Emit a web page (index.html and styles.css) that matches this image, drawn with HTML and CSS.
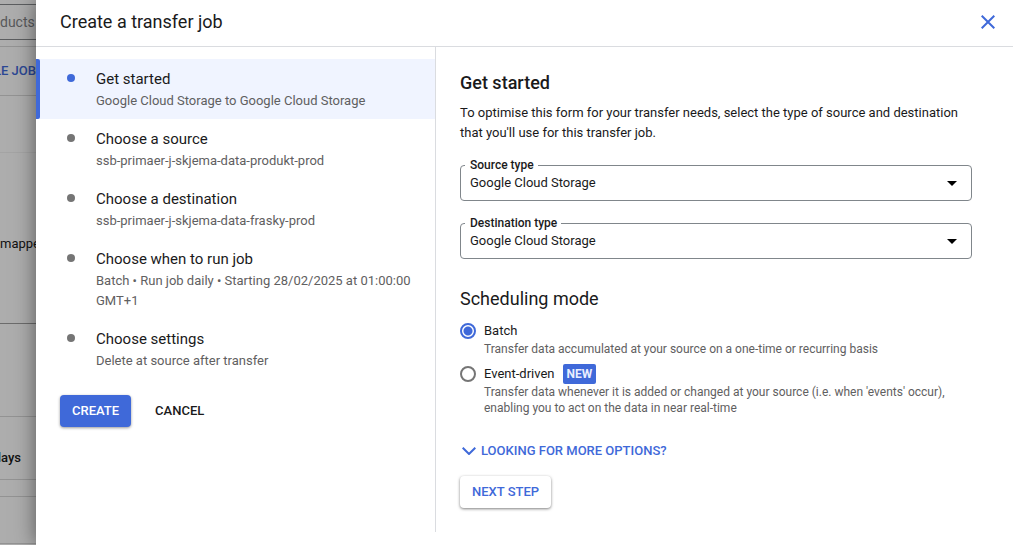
FILE: index.html
```html
<!DOCTYPE html>
<html lang="en-GB">
<head>
<meta charset="utf-8">
<meta name="viewport" content="width=device-width, initial-scale=1">
<title>Create a transfer job</title>
<link rel="stylesheet" href="styles.css">
</head>
<body class="page">
  <div class="backdrop">
    <div class="strip strip-top"></div>
    <div class="strip strip-search">ducts</div>
    <div class="strip strip-gap"></div>
    <div class="strip strip-toolbar"><a class="backdrop-link" href="#jobs">LE JOB</a></div>
    <div class="strip strip-filter"></div>
    <div class="strip strip-folder">mappe</div>
    <div class="strip strip-blank"></div>
    <div class="strip strip-days">lays</div>
    <div class="strip strip-thin"></div>
    <div class="strip strip-foot"></div>
  </div>
  <main class="panel">
    <header class="panel-header">
      <h1 class="title">Create a transfer job</h1>
      <button class="close" type="button" aria-label="Close">
        <svg width="14" height="14" viewBox="0 0 14 14" fill="none" stroke="currentColor" stroke-width="2"><path d="M.7.7l12.6 12.6M13.3.7L.7 13.3"/></svg>
      </button>
    </header>
    <div class="panel-body">
      <nav class="sidebar">
        <ol class="steps">
          <li class="step step-active"><span class="dot"></span><div class="step-text"><h2 class="step-title">Get started</h2><p class="step-note">Google Cloud Storage to Google Cloud Storage</p></div></li>
          <li class="step"><span class="dot"></span><div class="step-text"><h2 class="step-title">Choose a source</h2><p class="step-note">ssb-primaer-j-skjema-data-produkt-prod</p></div></li>
          <li class="step"><span class="dot"></span><div class="step-text"><h2 class="step-title">Choose a destination</h2><p class="step-note">ssb-primaer-j-skjema-data-frasky-prod</p></div></li>
          <li class="step"><span class="dot"></span><div class="step-text"><h2 class="step-title">Choose when to run job</h2><p class="step-note">Batch • Run job daily • Starting 28/02/2025 at 01:00:00 GMT+1</p></div></li>
          <li class="step"><span class="dot"></span><div class="step-text"><h2 class="step-title">Choose settings</h2><p class="step-note">Delete at source after transfer</p></div></li>
        </ol>
        <div class="actions">
          <button class="button button-primary" type="button">CREATE</button>
          <button class="button button-text" type="button">CANCEL</button>
        </div>
      </nav>
      <form class="form">
        <h2 class="form-title">Get started</h2>
        <p class="intro">To optimise this form for your transfer needs, select the type of source and destination that you'll use for this transfer job.</p>
        <div class="fields">
          <div class="field">
            <label class="field-label" for="source">Source type</label>
            <select class="select" id="source"><option>Google Cloud Storage</option></select>
            <svg class="arrow" width="10" height="5" viewBox="0 0 10 5"><path d="M0 0h10L5 5z"/></svg>
          </div>
          <div class="field">
            <label class="field-label" for="destination">Destination type</label>
            <select class="select" id="destination"><option>Google Cloud Storage</option></select>
            <svg class="arrow" width="10" height="5" viewBox="0 0 10 5"><path d="M0 0h10L5 5z"/></svg>
          </div>
        </div>
        <h2 class="section-title" id="mode">Scheduling mode</h2>
        <div class="options" role="radiogroup" aria-labelledby="mode">
          <div class="option">
            <div class="option-row"><input class="radio" type="radio" name="mode" id="batch" checked><label for="batch">Batch</label></div>
            <p class="option-note">Transfer data accumulated at your source on a one-time or recurring basis</p>
          </div>
          <div class="option">
            <div class="option-row"><input class="radio" type="radio" name="mode" id="event"><label for="event">Event-driven</label><span class="badge">NEW</span></div>
            <p class="option-note">Transfer data whenever it is added or changed at your source (i.e. when 'events' occur), enabling you to act on the data in near real-time</p>
          </div>
        </div>
        <button class="more" type="button">
          <svg width="14" height="8" viewBox="0 0 14 8" fill="none" stroke="currentColor" stroke-width="2"><path d="M.7.7L7 7l6.3-6.3"/></svg>
          LOOKING FOR MORE OPTIONS?
        </button>
        <button class="button button-raised" type="button">NEXT STEP</button>
      </form>
    </div>
  </main>
</body>
</html>
```
FILE: styles.css
```css
* { box-sizing: border-box; }

.page {
  --blue: #3f69d9;
  --grey: #5f6061;
  --ink: #1a1a1b;
  display: flex;
  min-height: 100vh;
  margin: 0;
  background: #fff;
  color: var(--ink);
  font: 13px/20px Roboto, "Liberation Sans", sans-serif;
}

h1, h2, p, ol { margin: 0; padding: 0; }
button { border: 0; background: none; font: inherit; cursor: pointer; }

/* Dimmed page behind the panel */
.backdrop {
  flex: 0 0 36px;
  display: flex;
  flex-direction: column;
  overflow: hidden;
  background: #adadad;
}
.strip {
  display: flex;
  align-items: center;
  border-bottom: 1px solid #939393;
  white-space: nowrap;
  color: #111;
}
.strip-top { height: 5px; border-color: #5c5e60; }
.strip-search { height: 35px; border-color: #5c5e60; color: #58595b; font-size: 14px; }
.strip-gap { height: 7px; }
.strip-toolbar { height: 49px; justify-content: flex-end; }
.backdrop-link { color: #2b4794; font-weight: 500; text-decoration: none; }
.strip-filter { height: 57px; border-color: #a4a4a4; }
.strip-folder { height: 171px; padding-top: 12px; border-color: #6c6c6c; }
.strip-blank { height: 93px; }
.strip-days { height: 63px; padding: 20px 15px 0 0; justify-content: flex-end; font-weight: 500; }
.strip-thin { height: 17px; }
.strip-foot { height: 47px; }

.panel {
  position: relative;
  flex: 1;
  min-width: 0;
  background: #fff;
  box-shadow: 0 0 20px rgba(0, 0, 0, .5);
}
.panel-header {
  display: flex;
  align-items: center;
  justify-content: space-between;
  padding: 8px 14px 10px 24px;
  border-bottom: 1px solid #dadce0;
}
.title { font-size: 18px; font-weight: 400; line-height: 28px; }
.close { display: grid; place-items: center; width: 22px; height: 22px; padding: 0; color: var(--blue); }
.panel-body { display: flex; }

.sidebar {
  flex: 0 0 400px;
  padding-top: 12px;
  border-right: 1px solid #dadce0;
}
.steps { list-style: none; }
.step { position: relative; display: flex; gap: 21px; padding: 8px 24px 8px 31px; }
.step-active { background: #f0f4ff; }
.step-active::before {
  content: "";
  position: absolute;
  inset: 0 auto 0 0;
  width: 4px;
  border-radius: 0 2px 2px 0;
  background: var(--blue);
}
.dot { flex: none; width: 8px; height: 8px; margin-top: 7px; border-radius: 50%; background: #757575; }
.step-active .dot { background: var(--blue); }
.step-title { font-size: 15px; font-weight: 400; line-height: 24px; }
.step-note { color: var(--grey); }

.actions { display: flex; gap: 12px; padding: 16px 24px; }
.button { height: 32px; padding: 0 12px; border-radius: 4px; font-weight: 500; }
.button-primary { background: var(--blue); color: #fff; box-shadow: 0 1px 3px rgba(0, 0, 0, .4); }
.button-text { color: var(--ink); }
.button-raised { color: var(--blue); background: #fff; box-shadow: 0 1px 3px rgba(0, 0, 0, .5); }

.form { flex: 1; min-width: 0; padding: 24px 41px 24px 24px; }
.form-title { font-size: 18px; font-weight: 500; line-height: 24px; }
.intro { margin-top: 8px; }
.fields { display: grid; gap: 22px; margin-top: 22px; }
.field { position: relative; display: flex; }
.field-label {
  position: absolute;
  top: -7px;
  left: 5px;
  padding: 0 4px 0 5px;
  background: #fff;
  font-size: 12px;
  font-weight: 500;
  line-height: 14px;
}
.select {
  appearance: none;
  width: 100%;
  height: 36px;
  padding: 0 32px 0 9px;
  border: 1px solid #80868b;
  border-radius: 4px;
  background: none;
  color: inherit;
  font: inherit;
}
.arrow { position: absolute; top: 16px; right: 15px; pointer-events: none; }

.section-title { margin-top: 28px; font-size: 18px; font-weight: 400; line-height: 24px; }
.options { display: grid; gap: 7px; margin-top: 10px; }
.option-row { display: flex; align-items: center; gap: 8px; }
.radio {
  appearance: none;
  width: 16px;
  height: 16px;
  margin: 0;
  border: 2px solid #757575;
  border-radius: 50%;
}
.radio:checked { border-color: var(--blue); background: radial-gradient(circle, var(--blue) 4px, #fff 5px); }
.option-note { padding-left: 24px; color: var(--grey); font-size: 12px; line-height: 16px; }
.badge { padding: 0 4px; border-radius: 2px; background: var(--blue); color: #e8eeff; font-size: 12px; font-weight: 700; }

.more {
  display: flex;
  align-items: center;
  gap: 5px;
  margin: 25px 0 15px;
  padding: 0 0 0 2px;
  color: var(--blue);
  font-weight: 500;
}
```
